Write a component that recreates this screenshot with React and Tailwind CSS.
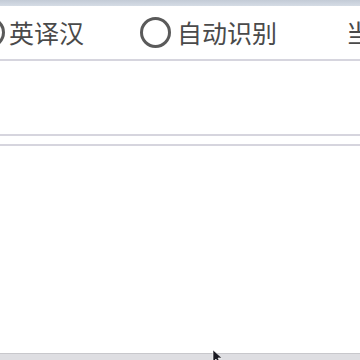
import React from 'react';

const Radio = () => (
    <span className="block w-[31px] h-[31px] shrink-0 rounded-full border-[3.5px] border-[#5a5a5a] bg-white" />
);

export default function App() {
    return (
        <div className="relative w-[360px] h-[360px] overflow-hidden bg-white flex flex-col font-['Noto_Sans_CJK_SC','Noto_Sans',sans-serif] text-[#4a4a4a]">
            {/* window top edge */}
            <div className="h-[6px] shrink-0 bg-gradient-to-b from-[#c3cbd6] to-[#d5dce5]" />

            {/* mode row */}
            <div className="h-[53px] shrink-0 flex items-center text-[25px] leading-none whitespace-nowrap">
                <div className="flex items-center gap-[4px] ml-[-26px]">
                    <Radio />
                    <span>英译汉</span>
                </div>
                <div className="flex items-center gap-[6px] ml-[56px]">
                    <Radio />
                    <span>自动识别</span>
                </div>
                <span className="ml-[69px]">当</span>
            </div>
            <div className="h-[2px] shrink-0 bg-[#d6d5de]" />

            {/* input area */}
            <div className="h-[73px] shrink-0" />
            <div className="h-[2px] shrink-0 bg-[#d6d5de]" />
            <div className="h-[8px] shrink-0" />
            <div className="h-[2px] shrink-0 bg-[#d6d5de]" />

            {/* output area */}
            <div className="flex-1" />

            {/* bottom bar */}
            <div className="h-[7px] shrink-0 border-t border-[#c8c8cc] bg-[#dedee2]" />

            {/* mouse pointer */}
            <svg className="absolute left-[212px] top-[350px]" width="10" height="14" viewBox="0 0 10 14">
                <path d="M1 0 L1 12 L4 9 L6 13 L8 12 L6 8 L10 8 Z" fill="#1a1a22" stroke="#ffffff" strokeWidth="0.6" />
            </svg>
        </div>
    );
}
